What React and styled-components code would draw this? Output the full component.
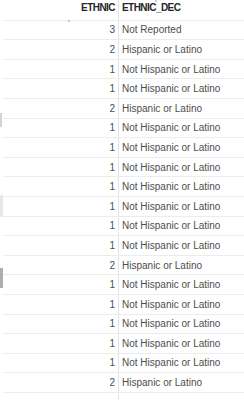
import React from "react"
import styled, { createGlobalStyle } from "styled-components"

const GlobalStyle = createGlobalStyle`
  html, body {
    margin: 0;
    padding: 0;
    background: #ffffff;
  }

  body {
    font-family: "Liberation Sans", Arial, sans-serif;
    width: 244px;
    height: 400px;
    overflow: hidden;
  }
`

const Page = styled.div`
  display: flex;
  width: 244px;
  height: 400px;
  overflow: hidden;
`

const Gutter = styled.div`
  display: flex;
  flex-direction: column;
  width: 3px;
  flex: none;
`

const GutterMark = styled.div`
  width: ${p => p.w || 3}px;
  height: ${p => p.h}px;
  margin-top: ${p => p.top}px;
  background: ${p => p.color};
  opacity: ${p => p.fade || 1};
`

const Table = styled.div`
  flex: 1;
  display: flex;
  flex-direction: column;
  position: relative;
`

const Divider = styled.div`
  position: absolute;
  top: 0;
  bottom: 0;
  left: 115px;
  width: 1px;
  background: #e4e4e4;
`

const Row = styled.div`
  display: grid;
  grid-template-columns: 115px 1fr;
  box-sizing: border-box;
  height: ${p => (p.head ? 20.6 : 19.6)}px;
  padding: ${p => (p.head ? "0 0 3px" : "1px 0 0")};
  flex: none;
  border-bottom: 1px solid #ececec;
  align-items: center;
  position: relative;
`

const Cell = styled.div`
  font-size: 10px;
  font-weight: ${p => (p.head ? 700 : 400)};
  color: ${p => (p.head ? "#262626" : "#4d4d4d")};
  text-align: ${p => (p.num ? "right" : "left")};
  padding: ${p => (p.num ? "0 3px 0 0" : "0 0 0 4px")};
  white-space: nowrap;
  line-height: 12px;
  letter-spacing: ${p => (p.head ? "-0.55px" : "0")};
`

const Ghost = styled.div`
  position: absolute;
  left: 0;
  right: 0;
  top: -9px;
  display: grid;
  grid-template-columns: 115px 1fr;
  opacity: 0.6;
`

const Speck = styled.span`
  position: absolute;
  left: 65px;
  bottom: -2px;
  width: 2px;
  height: 2px;
  border-radius: 50%;
  background: #b9b9b9;
`

const rows = [
  [3, "Not Reported"],
  [2, "Hispanic or Latino"],
  [1, "Not Hispanic or Latino"],
  [1, "Not Hispanic or Latino"],
  [2, "Hispanic or Latino"],
  [1, "Not Hispanic or Latino"],
  [1, "Not Hispanic or Latino"],
  [1, "Not Hispanic or Latino"],
  [1, "Not Hispanic or Latino"],
  [1, "Not Hispanic or Latino"],
  [1, "Not Hispanic or Latino"],
  [1, "Not Hispanic or Latino"],
  [2, "Hispanic or Latino"],
  [1, "Not Hispanic or Latino"],
  [1, "Not Hispanic or Latino"],
  [1, "Not Hispanic or Latino"],
  [1, "Not Hispanic or Latino"],
  [1, "Not Hispanic or Latino"],
  [2, "Hispanic or Latino"],
  ["", ""],
]

const App = () => {
  return (
    <Page>
      <GlobalStyle />
      <Gutter>
        <GutterMark top={113} h={14} w={2} color="#b7b7b7" fade={0.6} />
        <GutterMark top={68} h={22} color="#e3e8ef" />
        <GutterMark top={51} h={20} w={3} color="#6b6b6b" fade={0.55} />
      </Gutter>
      <Table>
        <Divider />
        <Row head>
          <Ghost>
            <Cell num>1</Cell>
            <Cell>Not Hispanic or Latino</Cell>
          </Ghost>
          <Cell head num>ETHNIC</Cell>
          <Cell head>ETHNIC_DEC</Cell>
          <Speck />
        </Row>
        {rows.map(([code, label], i) => (
          <Row key={i}>
            <Cell num>{code}</Cell>
            <Cell>{label}</Cell>
          </Row>
        ))}
      </Table>
    </Page>
  )
}

export default App
